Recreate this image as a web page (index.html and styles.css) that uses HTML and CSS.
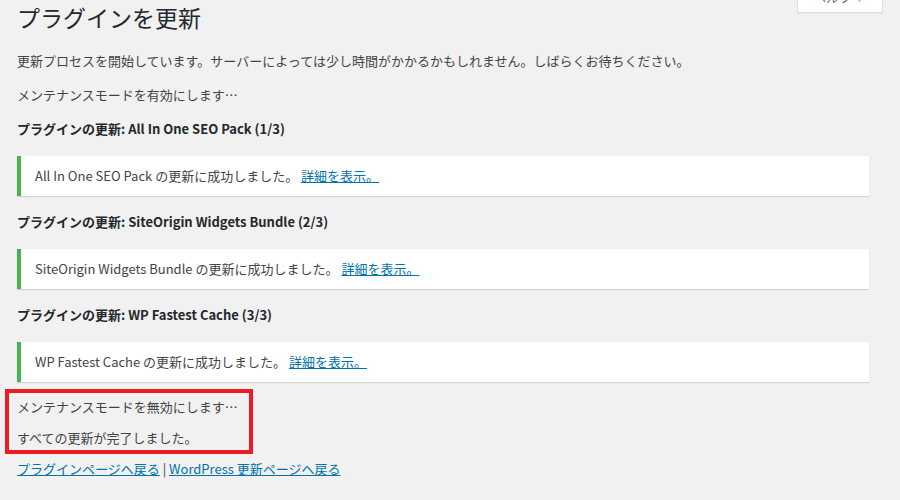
FILE: index.html
```html
<!DOCTYPE html>
<html lang="ja">
<head>
	<meta charset="UTF-8">
	<title>プラグインを更新</title>
	<link rel="stylesheet" href="styles.css">
</head>
<body>
	<div class="wrap">
		<div class="head">
			<h1>プラグインを更新</h1>
			<div class="helpTab">ヘルプ <span class="arr">▼</span></div>
		</div>
		<div class="body">
			<p>更新プロセスを開始しています。サーバーによっては少し時間がかかるかもしれません。しばらくお待ちください。</p>
			<p class="line">メンテナンスモードを有効にします…</p>
			<h2>プラグインの更新: All In One SEO Pack (1/3)</h2>
			<div class="notice"><p>All In One SEO Pack の更新に成功しました。 <a href="#">詳細を表示。</a></p></div>
			<h2 class="next">プラグインの更新: SiteOrigin Widgets Bundle (2/3)</h2>
			<div class="notice"><p>SiteOrigin Widgets Bundle の更新に成功しました。 <a href="#">詳細を表示。</a></p></div>
			<h2 class="next">プラグインの更新: WP Fastest Cache (3/3)</h2>
			<div class="notice"><p>WP Fastest Cache の更新に成功しました。 <a href="#">詳細を表示。</a></p></div>
			<p class="off">メンテナンスモードを無効にします…</p>
			<p class="done">すべての更新が完了しました。</p>
			<p class="done"><a href="#">プラグインページへ戻る</a> | <a href="#">WordPress 更新ページへ戻る</a></p>
			<!-- annotation box drawn over the last two messages -->
			<div class="mark"></div>
		</div>
	</div>
</body>
</html>
```

FILE: styles.css
```css
* {
	margin: 0;
	padding: 0;
}
body {
	background-color: #f1f1f1;
	color: #444;
	font-family: "Noto Sans CJK JP", "Open Sans", sans-serif;
	font-size: 13px;
	line-height: 20px;
}
.wrap {
	width: 900px;
	height: 500px;
	overflow: hidden;
}
.head {
	display: flex;
	justify-content: space-between;
	align-items: flex-start;
	padding: 0 17px;
}
.head h1 {
	font-size: 23px;
	font-weight: 400;
	line-height: 34px;
	color: #23282d;
}
.helpTab {
	width: 86px;
	height: 28px;
	margin-top: -15px;
	background-color: #fff;
	border: 1px solid #ddd;
	border-top: none;
	box-shadow: 0 1px 1px rgba(0,0,0,0.04);
	line-height: 24px;
	padding-left: 15px;
	box-sizing: border-box;
	color: #72777c;
}
.helpTab .arr {
	color: #e9a0a0;
	font-size: 9px;
}
.body {
	position: relative;
	padding: 17px 31px 0 17px;
}
.line {
	margin-top: 14px;
}
h2 {
	font-size: 13px;
	font-weight: 700;
	line-height: 20px;
	color: #23282d;
	margin-top: 14px;
}
h2.next {
	margin-top: 16px;
}
.notice {
	margin-top: 17px;
	background-color: #fff;
	border-left: 4px solid #46b450;
	box-shadow: 0 1px 1px 0 rgba(0,0,0,0.12);
	padding: 10px 14px;
}
a {
	color: #0073aa;
}
.off {
	margin-top: 15px;
}
.done {
	margin-top: 11px;
}
.mark {
	position: absolute;
	left: 5px;
	top: 355px;
	width: 248px;
	height: 65px;
	box-sizing: border-box;
	border: 4px solid #ed1c24;
}
```
